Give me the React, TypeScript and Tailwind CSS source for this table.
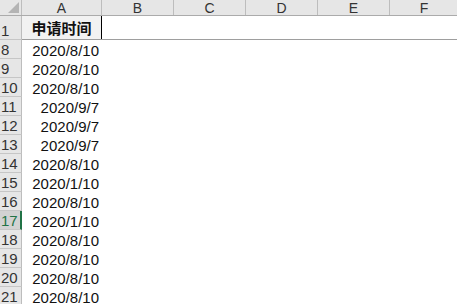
const rows: { n: number; date: string }[] = [
  { n: 8, date: "2020/8/10" },
  { n: 9, date: "2020/8/10" },
  { n: 10, date: "2020/8/10" },
  { n: 11, date: "2020/9/7" },
  { n: 12, date: "2020/9/7" },
  { n: 13, date: "2020/9/7" },
  { n: 14, date: "2020/8/10" },
  { n: 15, date: "2020/1/10" },
  { n: 16, date: "2020/8/10" },
  { n: 17, date: "2020/1/10" },
  { n: 18, date: "2020/8/10" },
  { n: 19, date: "2020/8/10" },
  { n: 20, date: "2020/8/10" },
  { n: 21, date: "2020/8/10" },
];

const otherCols = ["B", "C", "D", "E"];
const activeRow = 17;

function RowHead({ n, tall }: { n: number; tall?: boolean }) {
  const active = n === activeRow;
  return (
    <div
      className={
        "w-[22px] shrink-0 flex items-end pl-[1px] pb-[1px] border-b border-[#c6c6c6] text-[15px] leading-none " +
        (active
          ? "bg-[#d2d2d2] text-[#217346] border-r-2 border-r-[#217346]"
          : "bg-[#e6e6e6] text-[#333] border-r border-r-[#bdbdbd]") +
        (tall ? " h-[24px]" : " h-[19px]")
      }
    >
      {n}
    </div>
  );
}

export default function App() {
  return (
    <div
      className="w-[457px] h-[304px] overflow-hidden bg-white text-[#111]"
      style={{ fontFamily: '"Liberation Sans", Arial, sans-serif' }}
    >
      {/* column header strip */}
      <div className="flex h-[16px] bg-[#e6e6e6] border-b border-[#ababab] text-[14px] leading-none text-[#333]">
        <div className="w-[22px] shrink-0 relative border-r border-[#bdbdbd]">
          <div className="absolute right-[2px] bottom-[2px] w-0 h-0 border-l-[11px] border-l-transparent border-b-[11px] border-b-[#b4b4b4]" />
        </div>
        <div className="w-[80px] shrink-0 flex items-center justify-center border-r border-[#bdbdbd]">A</div>
        {otherCols.map((c) => (
          <div key={c} className="w-[72px] shrink-0 flex items-center justify-center border-r border-[#bdbdbd]">
            {c}
          </div>
        ))}
        <div className="w-[68px] shrink-0 flex items-center justify-center">F</div>
      </div>

      {/* row 1: title */}
      <div className="flex h-[24px] border-b border-[#9e9e9e]">
        <RowHead n={1} tall />
        <div
          className="w-[80px] shrink-0 flex items-center justify-center bg-[#f2f2f2] border-r border-black font-bold text-[15px] pt-[2px]"
          style={{ fontFamily: '"Noto Sans CJK SC", "Liberation Sans", sans-serif' }}
        >
          申请时间
        </div>
        <div className="flex-1 bg-white" />
      </div>

      {/* data rows */}
      {rows.map((r) => (
        <div key={r.n} className="flex h-[19px]">
          <RowHead n={r.n} />
          <div className="w-[80px] shrink-0 flex items-end justify-end pr-[3px] pb-[1px] text-[15px] leading-none">
            {r.date}
          </div>
          <div className="flex-1" />
        </div>
      ))}
    </div>
  );
}
